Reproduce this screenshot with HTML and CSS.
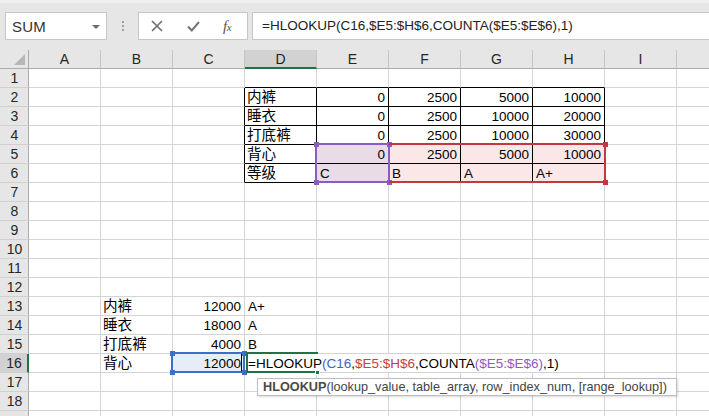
FILE: index.html
```html
<!DOCTYPE html>
<html>
<head>
<meta charset="utf-8">
<title>HLOOKUP</title>
<link rel="stylesheet" href="styles.css">
</head>
<body>
<div class="app">
  <div class="fbar">
    <div class="namebox"><span class="nb-text">SUM</span><span class="nb-arrow"></span></div>
    <div class="grip"><i></i><i></i><i></i></div>
    <div class="btns">
      <svg class="ico" width="12" height="12" viewBox="0 0 12 12"><path d="M1 1L11 11M11 1L1 11" stroke="#6e6e6e" stroke-width="1.6" fill="none"/></svg>
      <svg class="ico" width="13" height="11" viewBox="0 0 13 11"><path d="M1 5.5L4.8 9.5L12 1" stroke="#767676" stroke-width="2" fill="none"/></svg>
      <span class="fx">f<span class="fx-x">x</span></span>
    </div>
    <div class="formula">=HLOOKUP(C16,$E5:$H$6,COUNTA($E5:$E$6),1)</div>
  </div>

  <div class="sheet">
    <div class="r hd">
      <div class="corner"><span class="tri"></span></div>
      <div class="ch">A</div><div class="ch">B</div><div class="ch">C</div><div class="ch cur">D</div><div class="ch">E</div><div class="ch">F</div><div class="ch">G</div><div class="ch">H</div><div class="ch">I</div><div class="ch"></div>
    </div>
    <div class="r"><div class="rh">1</div><div class="c"></div><div class="c"></div><div class="c"></div><div class="c bb"></div><div class="c bb"></div><div class="c bb"></div><div class="c bb"></div><div class="c bb"></div><div class="c"></div><div class="c"></div></div>
    <div class="r"><div class="rh">2</div><div class="c"></div><div class="c"></div><div class="c br"></div><div class="c t zh">内裤</div><div class="c t n">0</div><div class="c t n">2500</div><div class="c t n">5000</div><div class="c t n">10000</div><div class="c"></div><div class="c"></div></div>
    <div class="r"><div class="rh">3</div><div class="c"></div><div class="c"></div><div class="c br"></div><div class="c t zh">睡衣</div><div class="c t n">0</div><div class="c t n">2500</div><div class="c t n">10000</div><div class="c t n">20000</div><div class="c"></div><div class="c"></div></div>
    <div class="r"><div class="rh">4</div><div class="c"></div><div class="c"></div><div class="c br"></div><div class="c t zh">打底裤</div><div class="c t n">0</div><div class="c t n">2500</div><div class="c t n">10000</div><div class="c t n">30000</div><div class="c"></div><div class="c"></div></div>
    <div class="r"><div class="rh">5</div><div class="c"></div><div class="c"></div><div class="c br"></div><div class="c t zh">背心</div><div class="c t n sp">0</div><div class="c t n sr">2500</div><div class="c t n sr">5000</div><div class="c t n sr">10000</div><div class="c"></div><div class="c"></div></div>
    <div class="r"><div class="rh">6</div><div class="c"></div><div class="c"></div><div class="c br"></div><div class="c t zh">等级</div><div class="c t sp">C</div><div class="c t sr">B</div><div class="c t sr">A</div><div class="c t sr">A+</div><div class="c"></div><div class="c"></div></div>
    <div class="r"><div class="rh">7</div><div class="c"></div><div class="c"></div><div class="c"></div><div class="c"></div><div class="c"></div><div class="c"></div><div class="c"></div><div class="c"></div><div class="c"></div><div class="c"></div></div>
    <div class="r"><div class="rh">8</div><div class="c"></div><div class="c"></div><div class="c"></div><div class="c"></div><div class="c"></div><div class="c"></div><div class="c"></div><div class="c"></div><div class="c"></div><div class="c"></div></div>
    <div class="r"><div class="rh">9</div><div class="c"></div><div class="c"></div><div class="c"></div><div class="c"></div><div class="c"></div><div class="c"></div><div class="c"></div><div class="c"></div><div class="c"></div><div class="c"></div></div>
    <div class="r"><div class="rh">10</div><div class="c"></div><div class="c"></div><div class="c"></div><div class="c"></div><div class="c"></div><div class="c"></div><div class="c"></div><div class="c"></div><div class="c"></div><div class="c"></div></div>
    <div class="r"><div class="rh">11</div><div class="c"></div><div class="c"></div><div class="c"></div><div class="c"></div><div class="c"></div><div class="c"></div><div class="c"></div><div class="c"></div><div class="c"></div><div class="c"></div></div>
    <div class="r"><div class="rh">12</div><div class="c"></div><div class="c"></div><div class="c"></div><div class="c"></div><div class="c"></div><div class="c"></div><div class="c"></div><div class="c"></div><div class="c"></div><div class="c"></div></div>
    <div class="r"><div class="rh">13</div><div class="c"></div><div class="c zh">内裤</div><div class="c n">12000</div><div class="c">A+</div><div class="c"></div><div class="c"></div><div class="c"></div><div class="c"></div><div class="c"></div><div class="c"></div></div>
    <div class="r"><div class="rh">14</div><div class="c"></div><div class="c zh">睡衣</div><div class="c n">18000</div><div class="c">A</div><div class="c"></div><div class="c"></div><div class="c"></div><div class="c"></div><div class="c"></div><div class="c"></div></div>
    <div class="r"><div class="rh">15</div><div class="c"></div><div class="c zh">打底裤</div><div class="c n">4000</div><div class="c">B</div><div class="c"></div><div class="c"></div><div class="c"></div><div class="c"></div><div class="c"></div><div class="c"></div></div>
    <div class="r"><div class="rh cur">16</div><div class="c"></div><div class="c zh">背心</div><div class="c n sb">12000</div><div class="c wide">=HLOOKUP<span class="k-b">(C16</span>,<span class="k-r">$E5:$H$6</span>,COUNTA<span class="k-p">($E5:$E$6)</span>,1)</div><div class="c"></div><div class="c"></div></div>
    <div class="r"><div class="rh">17</div><div class="c"></div><div class="c"></div><div class="c"></div><div class="c"></div><div class="c"></div><div class="c"></div><div class="c"></div><div class="c"></div><div class="c"></div><div class="c"></div></div>
    <div class="r"><div class="rh">18</div><div class="c"></div><div class="c"></div><div class="c"></div><div class="c"></div><div class="c"></div><div class="c"></div><div class="c"></div><div class="c"></div><div class="c"></div><div class="c"></div></div>
    <div class="r"><div class="rh"></div><div class="c"></div><div class="c"></div><div class="c"></div><div class="c"></div><div class="c"></div><div class="c"></div><div class="c"></div><div class="c"></div><div class="c"></div><div class="c"></div></div>

    <div class="rng rng-p"><i class="hd1 tl"></i><i class="hd1 tr"></i><i class="hd1 bl"></i><i class="hd1 brr"></i></div>
    <div class="rng rng-r"><i class="hd1 tr"></i><i class="hd1 brr"></i></div>
    <div class="rng rng-b"><i class="hd1 tl"></i><i class="hd1 tr"></i><i class="hd1 bl"></i><i class="hd1 brr"></i></div>
    <div class="caret"></div>
    <div class="active"></div>
    <div class="fill-handle"></div>
    <div class="tip"><b>HLOOKUP</b>(lookup_value, table_array, row_index_num, [range_lookup])</div>
  </div>
</div>
</body>
</html>
```

FILE: styles.css
```css
* { box-sizing: border-box; }
html, body { margin: 0; padding: 0; }
body {
  width: 709px;
  height: 416px;
  overflow: hidden;
  background: #fff;
  font-family: "Liberation Sans", "Noto Sans CJK SC", sans-serif;
  color: #000;
}
.app { width: 709px; height: 416px; overflow: hidden; }

/* formula bar */
.fbar {
  height: 50px;
  background: #e6e6e6;
  border-top: 3px solid #efefef;
  display: flex;
  align-items: flex-start;
  padding: 9px 0 0 5px;
}
.namebox {
  width: 102px;
  height: 28px;
  background: #fff;
  border: 1px solid #c6c6c6;
  display: flex;
  align-items: center;
  justify-content: space-between;
  padding: 0 6px 0 6px;
}
.nb-text { font-size: 15px; color: #333; letter-spacing: 0.2px; }
.nb-arrow {
  width: 0; height: 0;
  border-left: 4px solid transparent;
  border-right: 4px solid transparent;
  border-top: 4px solid #6a6a6a;
  margin-top: 1px;
}
.grip {
  width: 31px;
  height: 28px;
  display: flex;
  flex-direction: column;
  align-items: center;
  justify-content: center;
  gap: 2px;
}
.grip i { display: block; width: 2px; height: 2px; background: #a0a0a0; }
.btns {
  width: 110px;
  height: 28px;
  background: #fff;
  border: 1px solid #c6c6c6;
  display: flex;
  align-items: center;
  padding: 0 0 0 12px;
  gap: 0;
}
.btns .ico:first-child { margin-right: 24px; }
.btns .ico:nth-child(2) { margin-right: 23px; }
.fx {
  font-family: "Liberation Serif", serif;
  font-style: italic;
  font-size: 15px;
  color: #555;
  letter-spacing: -0.5px;
}
.fx-x { font-size: 11px; }
.formula {
  margin-left: 4px;
  flex: 1;
  height: 28px;
  background: #fff;
  border: 1px solid #c6c6c6;
  border-right: none;
  padding-left: 9px;
  font-size: 13.5px;
  line-height: 26px;
  color: #222;
  white-space: nowrap;
}

/* sheet */
.sheet { position: relative; width: 709px; overflow: hidden; }
.r { display: flex; height: 19px; width: 749px; }
.corner, .rh {
  flex: 0 0 29px;
  background: #e6e6e6;
  border-right: 1px solid #ababab;
}
.corner { border-bottom: 1px solid #ababab; position: relative; }
.tri {
  position: absolute;
  right: 3px;
  bottom: 3px;
  width: 0; height: 0;
  border-left: 11px solid transparent;
  border-bottom: 11px solid #b6b6b6;
}
.ch {
  flex: 0 0 72px;
  background: #e6e6e6;
  border-right: 1px solid #c4c4c4;
  border-bottom: 1px solid #ababab;
  text-align: center;
  font-size: 14px;
  line-height: 19px;
  color: #262626;
}
.ch.cur { background: #d2d2d2; border-bottom: 2px solid #217346; color: #1e1e1e; }
.rh {
  border-bottom: 1px solid #d0d0d0;
  text-align: center;
  font-size: 14px;
  line-height: 19px;
  color: #262626;
  padding-left: 1px;
}
.rh.cur { background: #d2d2d2; border-right: 2px solid #217346; }
.c {
  flex: 0 0 72px;
  border-right: 1px solid #d4d4d4;
  border-bottom: 1px solid #d4d4d4;
  font-size: 13.5px;
  line-height: 19px;
  padding: 0 3px 0 3px;
  white-space: nowrap;
  overflow: visible;
}
.c.zh { font-size: 14.6px; padding-left: 2px; }
.c.n { text-align: right; }
.c.bb { border-bottom-color: #000; }
.c.br { border-right-color: #000; }
.c.t { border-right-color: #000; border-bottom-color: #000; }
.c.sp { background: #eadbe8; }
.c.sr { background: #fbe6e8; }
.c.sb { background: #e6edf8; }
.c.wide { flex: 0 0 360px; padding-left: 3px; background: #fff; }
.k-b { color: #3a67c6; }
.k-r { color: #cf3b3b; }
.k-p { color: #9357c9; }

/* overlays */
.rng { position: absolute; border: 2px solid; }
.rng-p { left: 315px; top: 93px; width: 75px; height: 40px; border-color: #8b5cc4; }
.rng-r { left: 389px; top: 93px; width: 217px; height: 40px; border-color: #c4373f; border-left: none; }
.rng-b { left: 171px; top: 302px; width: 74px; height: 21px; border-color: #3c6fcb; }
.hd1 { position: absolute; width: 5px; height: 5px; }
.rng-p .hd1 { background: #8b5cc4; }
.rng-r .hd1 { background: #c4373f; }
.rng-b .hd1 { background: #3c6fcb; }
.hd1.tl { left: -3.5px; top: -3.5px; }
.hd1.tr { right: -3.5px; top: -3.5px; }
.hd1.bl { left: -3.5px; bottom: -3.5px; }
.hd1.brr { right: -3.5px; bottom: -3.5px; }
.caret { position: absolute; left: 241px; top: 304px; width: 1px; height: 17px; background: #000; }
.active {
  position: absolute;
  left: 246px; top: 302px; width: 72px; height: 21px;
  border: 2px solid #217346;
  border-right: none;
}
.fill-handle { position: absolute; left: 315px; top: 320px; width: 5px; height: 5px; background: #217346; border: 1px solid #fff; }
.tip {
  position: absolute;
  left: 257px; top: 328px;
  width: 420px; height: 18px;
  background: #fff;
  border: 1px solid #bdbdbd;
  box-shadow: 1px 1px 2px rgba(0,0,0,0.15);
  font-family: "Liberation Sans", sans-serif;
  font-size: 12.7px;
  line-height: 16px;
  padding-left: 5px;
  color: #444;
  white-space: nowrap;
}
.tip b { color: #4a4a4a; }
```
